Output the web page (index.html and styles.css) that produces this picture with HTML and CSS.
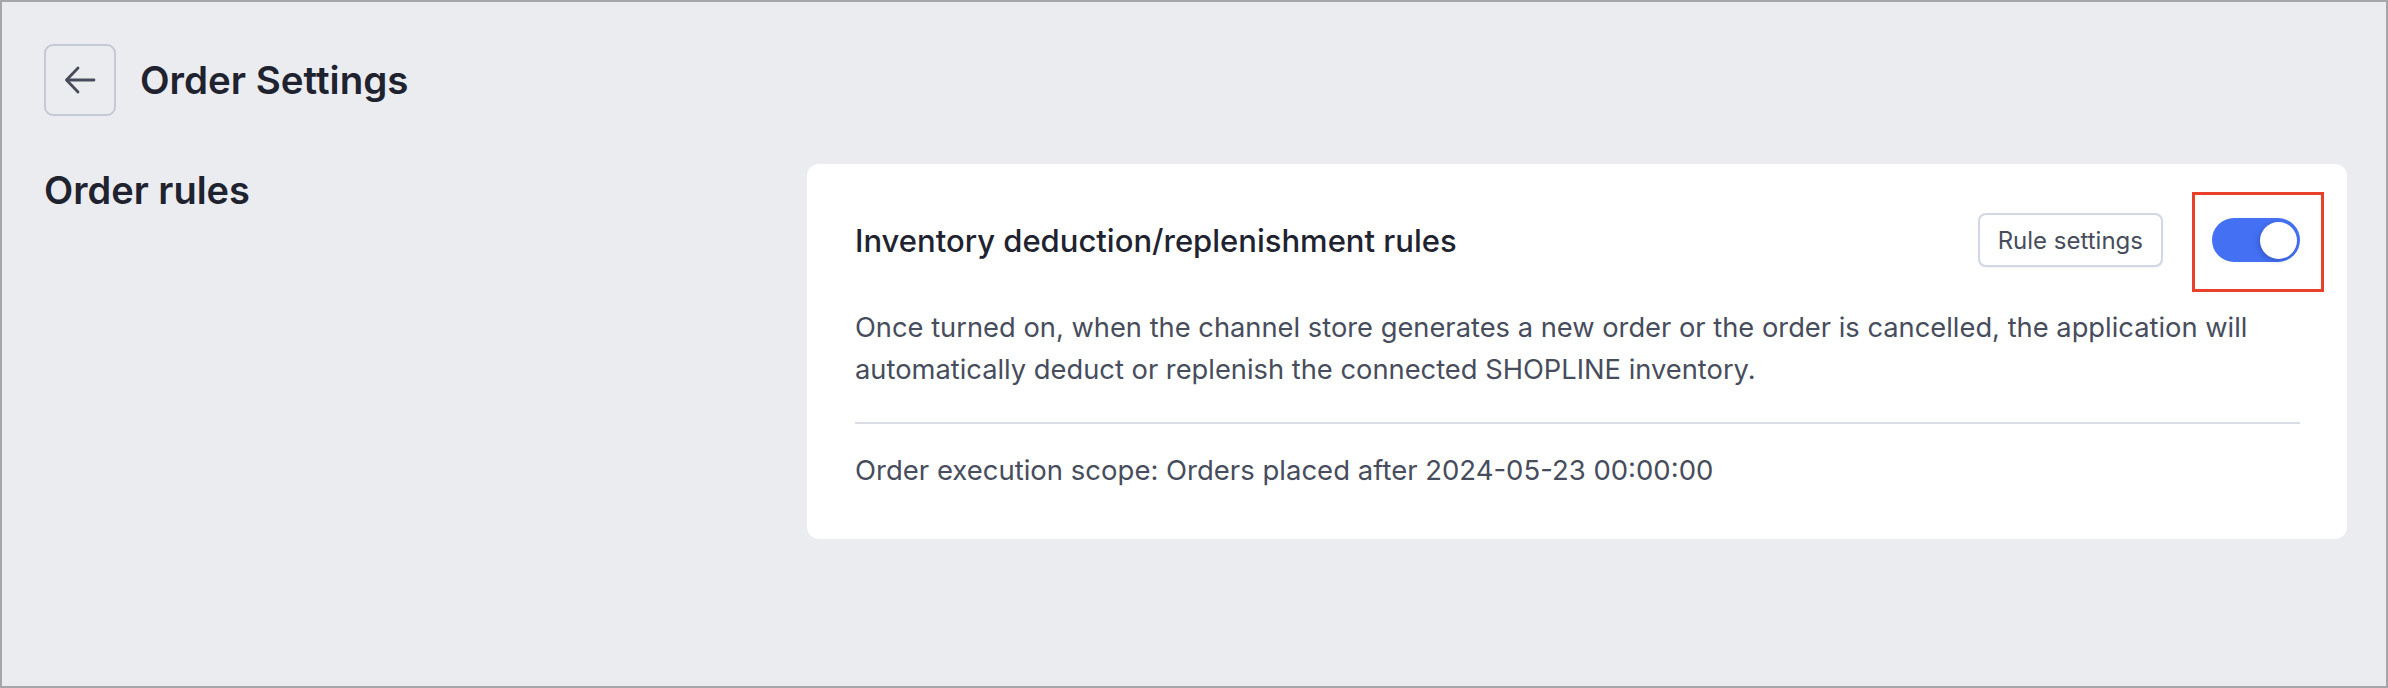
FILE: index.html
```html
<!DOCTYPE html>
<html lang="en">
<head>
<meta charset="utf-8">
<title>Order Settings</title>
<link rel="stylesheet" href="styles.css">
</head>
<body>
<div class="page">
  <header class="header">
    <button class="back" aria-label="Back">
      <svg width="32" height="32" viewBox="0 0 32 32" fill="none" stroke="#474c5a" stroke-width="2.8" stroke-linecap="round" stroke-linejoin="round">
        <path d="M30 16H3"/>
        <path d="M14 4L2.5 16L14 28"/>
      </svg>
    </button>
    <h1 class="title">Order Settings</h1>
  </header>
  <section class="section">
    <h2 class="section-label">Order rules</h2>
    <div class="card">
      <div class="card-head">
        <div class="card-title">Inventory deduction/replenishment rules</div>
        <div class="actions">
          <button class="btn">Rule settings</button>
          <div class="toggle-wrap">
            <div class="toggle"><span class="knob"></span></div>
            <div class="highlight"></div>
          </div>
        </div>
      </div>
      <p class="desc">Once turned on, when the channel store generates a new order or the order is cancelled, the application will automatically deduct or replenish the connected SHOPLINE inventory.</p>
      <div class="divider"></div>
      <p class="scope">Order execution scope: Orders placed after 2024-05-23 00:00:00</p>
    </div>
  </section>
</div>
</body>
</html>
```

FILE: styles.css
```css
* { box-sizing: border-box; }
html, body { margin: 0; padding: 0; }
body {
  width: 2388px;
  height: 688px;
  background: #ebecf0;
  border: 2px solid #a6a6aa;
  font-family: Inter, "Noto Sans", sans-serif;
  overflow: hidden;
}
.page {
  padding: 42px 39px 0 42px;
}
.header {
  display: flex;
  align-items: center;
  gap: 24px;
  height: 72px;
}
.back {
  width: 72px;
  height: 72px;
  border: 2px solid #c4c9d5;
  border-radius: 9px;
  background: transparent;
  display: flex;
  align-items: center;
  justify-content: center;
  padding: 0;
}
.title {
  margin: 0;
  font-size: 38.5px;
  font-weight: 600;
  color: #1f2330;
  line-height: 1.2;
}
.section {
  display: flex;
  margin-top: 48px;
}
.section-label {
  flex: 0 0 763px;
  margin: 0;
  font-size: 38px;
  font-weight: 600;
  color: #1f2330;
  line-height: 53px;
}
.card {
  flex: 1;
  background: #ffffff;
  border-radius: 12px;
  padding: 49px 47px 48px 48px;
}
.card-head {
  display: flex;
  align-items: center;
  justify-content: space-between;
  height: 54px;
}
.card-title {
  font-size: 31px;
  font-weight: 500;
  color: #1f2330;
  line-height: 40px;
  padding-top: 2px;
}
.actions {
  display: flex;
  align-items: center;
  gap: 49px;
}
.btn {
  height: 54px;
  padding: 0 18px;
  border: 2px solid #d3d7e3;
  border-radius: 8px;
  background: #ffffff;
  font-family: Inter, "Noto Sans", sans-serif;
  font-size: 24px;
  color: #474d5c;
  box-shadow: 0 1px 2px rgba(30, 40, 70, 0.06);
}
.toggle-wrap {
  position: relative;
}
.toggle {
  width: 88px;
  height: 44px;
  border-radius: 22px;
  background: #4470f4;
  display: flex;
  align-items: center;
  justify-content: flex-end;
  padding: 0 3.5px;
}
.knob {
  width: 37px;
  height: 37px;
  border-radius: 50%;
  background: #ffffff;
  box-shadow: -2px 2px 5px rgba(20, 30, 80, 0.25);
}
.highlight {
  position: absolute;
  left: -20px;
  right: -24px;
  top: -26px;
  bottom: -30px;
  border: 3px solid #e8402a;
}
.desc {
  margin: 40px 0 0;
  font-size: 27.3px;
  line-height: 42px;
  color: #474d5c;
}
.divider {
  margin-top: 31px;
  height: 2px;
  background: #dadde6;
}
.scope {
  margin: 25px 0 0;
  font-size: 27.5px;
  line-height: 42px;
  color: #474d5c;
}
```
